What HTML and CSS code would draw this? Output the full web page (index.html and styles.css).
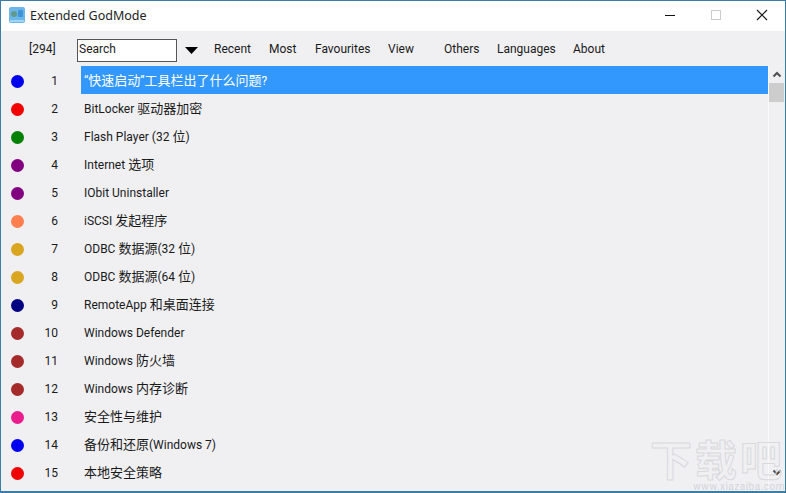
FILE: index.html
```html
<!DOCTYPE html>
<html lang="zh">
<head>
<meta charset="utf-8">
<title>Extended GodMode</title>
<link rel="stylesheet" href="styles.css">
</head>
<body>
<div class="window">
  <header class="titlebar">
    <svg class="app-icon" width="16" height="16" viewBox="0 0 16 16"><rect width="16" height="16" rx="2" fill="#6bb8e8"/><rect x="1" y="13" width="14" height="2" fill="#9fd4f2"/><circle cx="5" cy="7" r="3" fill="#5f9a8c"/><rect x="9" y="3" width="5" height="7" rx="1" fill="#3f93d6"/></svg>
    <span class="title">Extended GodMode</span>
    <div class="controls">
      <svg class="ctl" width="46" height="30" viewBox="0 0 46 30"><rect x="18" y="15" width="10" height="1" fill="#111"/></svg>
      <svg class="ctl" width="46" height="30" viewBox="0 0 46 30"><rect x="18.500" y="10.500" width="9" height="9" fill="none" stroke="#ccc"/></svg>
      <svg class="ctl" width="46" height="30" viewBox="0 0 46 30"><path d="M18 10l10 10M28 10l-10 10" stroke="#111" stroke-width="1.100" fill="none"/></svg>
    </div>
  </header>
  <nav class="toolbar">
    <span class="count">[294]</span>
    <div class="search">Search</div>
    <svg class="caret" width="13" height="7" viewBox="0 0 13 7"><path d="M0 0h13L6.500 7z" fill="#000"/></svg>
    <span class="menu m-recent">Recent</span>
    <span class="menu m-most">Most</span>
    <span class="menu m-fav">Favourites</span>
    <span class="menu m-view">View</span>
    <span class="menu m-others">Others</span>
    <span class="menu m-lang">Languages</span>
    <span class="menu">About</span>
  </nav>
  <main class="content">
    <ul class="list">
      <li class="row"><i class="dot c-blue"></i><span class="num">1</span><span class="label selected">“<span class="zh">快速启动</span>”<span class="zh">工具栏出了什么问题</span>?</span></li>
      <li class="row"><i class="dot c-red"></i><span class="num">2</span><span class="label">BitLocker <span class="zh">驱动器加密</span></span></li>
      <li class="row"><i class="dot c-green"></i><span class="num">3</span><span class="label">Flash Player (32 <span class="zh">位</span>)</span></li>
      <li class="row"><i class="dot c-purple"></i><span class="num">4</span><span class="label">Internet <span class="zh">选项</span></span></li>
      <li class="row"><i class="dot c-purple"></i><span class="num">5</span><span class="label">IObit Uninstaller</span></li>
      <li class="row"><i class="dot c-coral"></i><span class="num">6</span><span class="label">iSCSI <span class="zh">发起程序</span></span></li>
      <li class="row"><i class="dot c-gold"></i><span class="num">7</span><span class="label">ODBC <span class="zh">数据源</span>(32 <span class="zh">位</span>)</span></li>
      <li class="row"><i class="dot c-gold"></i><span class="num">8</span><span class="label">ODBC <span class="zh">数据源</span>(64 <span class="zh">位</span>)</span></li>
      <li class="row"><i class="dot c-navy"></i><span class="num">9</span><span class="label">RemoteApp <span class="zh">和桌面连接</span></span></li>
      <li class="row"><i class="dot c-brown"></i><span class="num">10</span><span class="label">Windows Defender</span></li>
      <li class="row"><i class="dot c-brown"></i><span class="num">11</span><span class="label">Windows <span class="zh">防火墙</span></span></li>
      <li class="row"><i class="dot c-brown"></i><span class="num">12</span><span class="label">Windows <span class="zh">内存诊断</span></span></li>
      <li class="row"><i class="dot c-pink"></i><span class="num">13</span><span class="label"><span class="zh">安全性与维护</span></span></li>
      <li class="row"><i class="dot c-blue"></i><span class="num">14</span><span class="label"><span class="zh">备份和还原</span>(Windows 7)</span></li>
      <li class="row"><i class="dot c-red"></i><span class="num">15</span><span class="label"><span class="zh">本地安全策略</span></span></li>
    </ul>
    <div class="scrollbar">
      <svg width="16" height="17" viewBox="0 0 16 17"><path d="M4.500 10.500l3.500-3.500 3.500 3.500" fill="none" stroke="#505050" stroke-width="2"/></svg>
      <div class="thumb"></div>
      <div class="track"></div>
      <svg width="16" height="17" viewBox="0 0 16 17"><path d="M4.500 6.500l3.500 3.500 3.500-3.500" fill="none" stroke="#505050" stroke-width="2"/></svg>
    </div>
  </main>
  <div class="watermark"><span class="wm-big">下载吧</span><span class="wm-small">www.xiazaiba.com</span></div>
</div>
</body>
</html>
```
FILE: styles.css
```css
* { box-sizing: border-box; }
html, body { margin: 0; height: 100%; }
body { font-family: Roboto, "Noto Sans CJK SC", sans-serif; font-size: 12px; color: #1a1a1a; overflow: hidden; }
.zh { font-family: "Noto Sans CJK SC", sans-serif; font-size: 13px; line-height: 1; }
.window { position: relative; width: 786px; height: 493px; border: 1px solid #3a7ea6; border-bottom-width: 2px; background: #f0f0f3; display: flex; flex-direction: column; overflow: hidden; }
.titlebar { height: 30px; background: #fff; display: flex; align-items: center; padding: 0 0 2px 8px; flex: none; }
.app-icon { flex: none; }
.title { margin-left: 5px; font-family: "Noto Sans", sans-serif; font-size: 12.500px; color: #222; }
.controls { margin-left: auto; display: flex; }
.ctl { display: block; }
.toolbar { height: 35px; display: flex; align-items: center; flex: none; }
.count { margin-left: 28px; width: 48px; }
.search { width: 100px; height: 23px; margin-top: 4px; border: 1px solid #555; background: #fff; line-height: 19px; padding-left: 1px; color: #222; }
.caret { margin: 4px 0 0 8px; flex: none; }
.menu { flex: none; }
.m-recent { margin-left: 16px; width: 55px; }
.m-most { width: 46px; }
.m-fav { width: 73px; }
.m-view { width: 56px; }
.m-others { width: 53px; }
.m-lang { width: 76px; }
.content { flex: 1; display: flex; min-height: 0; }
.list { list-style: none; margin: 0; padding: 0; width: 767px; flex: none; }
.row { height: 28px; display: flex; align-items: center; }
.dot { width: 13px; height: 13px; border-radius: 50%; margin: 2px 0 0 10px; flex: none; }
.num { width: 40px; margin: 2px 0 0 8px; flex: none; text-align: right; padding-right: 14px; }
.label { height: 28px; line-height: 31px; margin-left: 9px; padding-left: 3px; flex: 1; }
.selected { background: #3398fe; color: #fff; }
.scrollbar { width: 17px; padding-bottom: 10px; border-left: 1px solid #f9f9fb; flex: none; display: flex; flex-direction: column; }
.scrollbar svg { display: block; flex: none; }
.thumb { height: 19px; width: 15px; background: #cdcdcd; flex: none; }
.track { flex: 1; }
.c-blue { background: #0000ee; }
.c-red { background: #f00000; }
.c-green { background: #008000; }
.c-purple { background: #800080; }
.c-coral { background: #ff7f50; }
.c-gold { background: #daa520; }
.c-navy { background: #000080; }
.c-brown { background: #a52a2a; }
.c-pink { background: #e91e8c; }
.watermark { position: absolute; left: 648px; top: 436px; width: 136px; display: flex; flex-direction: column; align-items: flex-end; pointer-events: none; }
.wm-big { font-family: "Noto Sans CJK SC", sans-serif; font-size: 42px; line-height: 42px; height: 42px; letter-spacing: 3px; font-weight: 700; color: transparent; -webkit-text-stroke: 1px #d9d9dc; white-space: nowrap; }
.wm-small { margin-top: 2px; font-size: 10px; line-height: 11px; height: 11px; color: #d5d5d8; letter-spacing: 0.500px; white-space: nowrap; }
```
